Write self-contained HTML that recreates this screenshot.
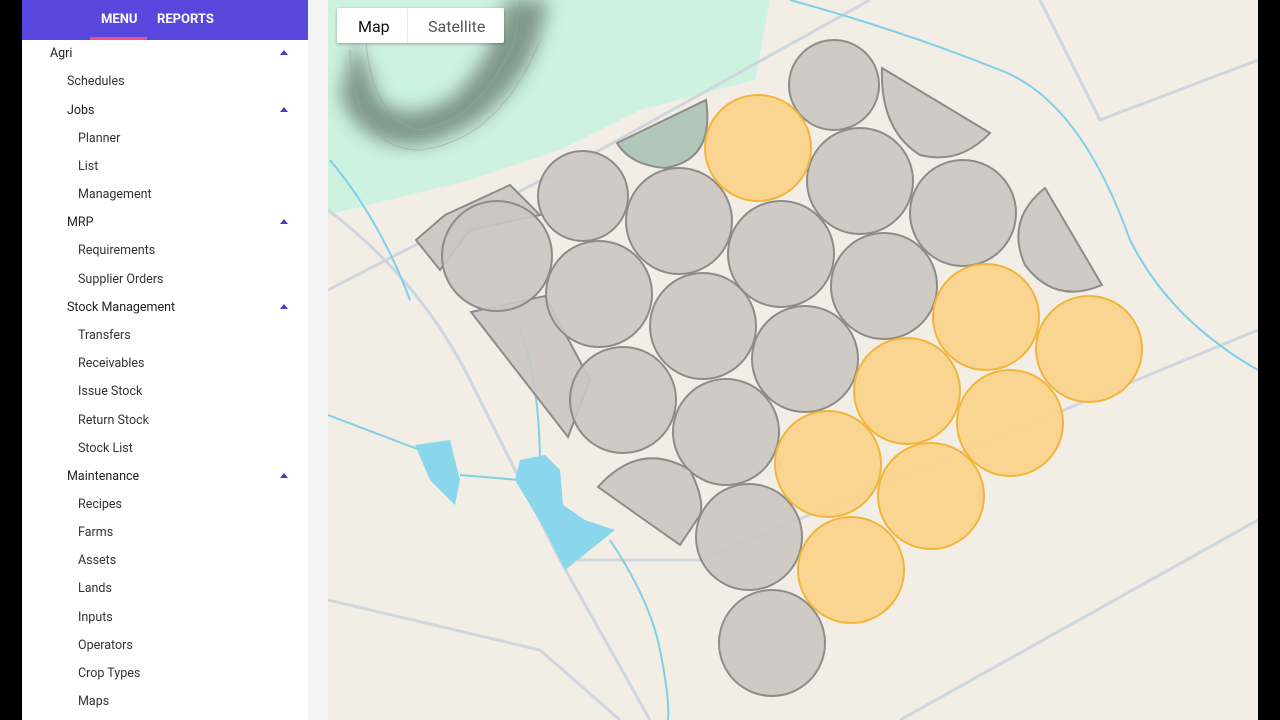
<!DOCTYPE html>
<html><head><meta charset="utf-8"><style>
*{margin:0;padding:0;box-sizing:border-box}
body{width:1280px;height:720px;overflow:hidden;background:#000;position:relative;font-family:"Roboto","Liberation Sans",sans-serif}
#side{position:absolute;left:22px;top:0;width:286px;height:720px;background:#fff}
#gap{position:absolute;left:308px;top:0;width:20px;height:720px;background:#f4f4f4}
#hdr{height:40px;background:#5847dd;position:relative;color:#fff;font-weight:bold;font-size:13px}
#hdr span{position:absolute;top:12px}
#ul{position:absolute;left:68px;top:37px;width:57px;height:3px;background:#e94e8e}
.it{position:absolute;font-size:12.5px;color:#333;white-space:nowrap}
.tri{position:absolute;left:258px;width:0;height:0;border-left:4px solid transparent;border-right:4px solid transparent;border-bottom:5px solid #4a3cc8}
#map{position:absolute;left:328px;top:0;width:930px;height:720px;background:#f2eee6;overflow:hidden}
#tg{position:absolute;left:337px;top:8px;width:167px;height:35px;background:#fff;box-shadow:0 1px 3px rgba(0,0,0,.3);border-radius:2px;font-size:16px}
#tg span{position:absolute;top:9px}
</style></head><body>
<div id="side">
<div id="hdr"><span style="left:79px">MENU</span><span style="left:135px">REPORTS</span><div id="ul"></div></div>
<div class="it" style="left:28px;top:46px;color:#222">Agri</div><div class="tri" style="top:50px"></div>
<div class="it" style="left:45px;top:74px">Schedules</div>
<div class="it" style="left:45px;top:103px;color:#222">Jobs</div><div class="tri" style="top:107px"></div>
<div class="it" style="left:56px;top:131px">Planner</div>
<div class="it" style="left:56px;top:159px">List</div>
<div class="it" style="left:56px;top:187px">Management</div>
<div class="it" style="left:45px;top:215px;color:#222">MRP</div><div class="tri" style="top:219px"></div>
<div class="it" style="left:56px;top:243px">Requirements</div>
<div class="it" style="left:56px;top:272px">Supplier Orders</div>
<div class="it" style="left:45px;top:300px;color:#222">Stock Management</div><div class="tri" style="top:304px"></div>
<div class="it" style="left:56px;top:328px">Transfers</div>
<div class="it" style="left:56px;top:356px">Receivables</div>
<div class="it" style="left:56px;top:384px">Issue Stock</div>
<div class="it" style="left:56px;top:413px">Return Stock</div>
<div class="it" style="left:56px;top:441px">Stock List</div>
<div class="it" style="left:45px;top:469px;color:#222">Maintenance</div><div class="tri" style="top:473px"></div>
<div class="it" style="left:56px;top:497px">Recipes</div>
<div class="it" style="left:56px;top:525px">Farms</div>
<div class="it" style="left:56px;top:553px">Assets</div>
<div class="it" style="left:56px;top:581px">Lands</div>
<div class="it" style="left:56px;top:610px">Inputs</div>
<div class="it" style="left:56px;top:638px">Operators</div>
<div class="it" style="left:56px;top:666px">Crop Types</div>
<div class="it" style="left:56px;top:694px">Maps</div>
</div>
<div id="gap"></div>
<div id="map">
<svg width="930" height="720" viewBox="328 0 930 720" xmlns="http://www.w3.org/2000/svg">
<defs><filter id="bl"><feGaussianBlur stdDeviation="9"/></filter></defs>
<path d="M328,0 L770,0 L755,80 L640,110 L560,150 L470,180 L328,215 Z" fill="#cdf2e0"/>
<path d="M340,95 Q360,150 420,145 Q490,130 530,60 Q545,25 548,0 L505,0 Q495,55 455,95 Q410,125 380,100 Q365,60 355,40 Z" fill="#55675e" opacity=".65" filter="url(#bl)"/>
<g fill="none" stroke="#9aa8a0" stroke-width="1" opacity=".6">
<path d="M365,30 Q370,120 420,130 Q480,120 515,40 L520,0"/>
<path d="M350,50 Q355,150 420,150 Q500,140 540,40"/>
</g>
<g fill="none" stroke="#d0d6de" stroke-width="3">
<path d="M328,290 L600,150 L870,0"/>
<path d="M328,210 Q420,280 470,380 L560,560 L650,720"/>
<path d="M560,560 L700,560 L1258,330"/>
<path d="M328,600 L540,650 L620,720"/>
<path d="M1040,0 L1100,120 L1258,60"/>
<path d="M900,720 L1258,520"/>
</g>
<g fill="none" stroke="#7fd0e8" stroke-width="2">
<path d="M330,160 Q380,220 410,300 M328,415 L420,450 M460,475 L520,480 M540,470 Q540,380 520,330"/>
<path d="M610,540 Q650,600 660,650 Q670,700 668,720"/>
<path d="M790,0 Q900,30 1000,70 Q1080,100 1130,240 Q1170,320 1258,370"/>
</g>
<path d="M415,445 L450,440 L460,480 L455,505 L430,480 Z" fill="#8ad6ec"/>
<path d="M520,460 L545,455 L560,470 L563,505 L585,520 L615,530 L565,570 L545,530 L515,480 Z" fill="#8ad6ec"/>
<g fill="#cbc6c0" fill-opacity=".9" stroke="#8e8c8a" stroke-width="2">
<path d="M882,68 L990,133 Q960,165 920,155 Q880,130 882,68 Z"/>
<path d="M1045,188 L1102,285 Q1055,305 1025,265 Q1005,220 1045,188 Z"/>
<path d="M617,143 L706,100 Q715,160 665,168 Q630,165 617,143 Z" fill="#a9c2b5"/>
<path d="M598,487 Q640,440 690,470 Q705,500 700,515 L680,545 Z"/>
<path d="M471,312 L545,296 L590,380 L568,437 Z"/>
<path d="M416,240 L445,215 L510,185 L540,215 L470,230 L440,270 Z"/>
<circle cx="834" cy="85" r="45"/><circle cx="583" cy="196" r="45"/>
<circle cx="679" cy="221" r="53"/><circle cx="860" cy="181" r="53"/>
<circle cx="963" cy="213" r="53"/><circle cx="497" cy="256" r="55"/>
<circle cx="599" cy="294" r="53"/><circle cx="781" cy="254" r="53"/>
<circle cx="884" cy="286" r="53"/><circle cx="703" cy="326" r="53"/>
<circle cx="805" cy="359" r="53"/><circle cx="623" cy="400" r="53"/>
<circle cx="726" cy="432" r="53"/><circle cx="749" cy="537" r="53"/>
<circle cx="772" cy="643" r="53"/>
</g>
<g fill="#fbd38a" fill-opacity=".92" stroke="#f2b53a" stroke-width="2">
<circle cx="758" cy="148" r="53"/><circle cx="986" cy="317" r="53"/>
<circle cx="1089" cy="349" r="53"/><circle cx="907" cy="391" r="53"/>
<circle cx="1010" cy="423" r="53"/><circle cx="828" cy="464" r="53"/>
<circle cx="931" cy="496" r="53"/><circle cx="851" cy="570" r="53"/>
</g>
</svg>
</div>
<div id="tg"><span style="left:21px;color:#111">Map</span><div style="position:absolute;left:70px;top:0;width:1px;height:35px;background:#e6e6e6"></div><span style="left:91px;color:#555">Satellite</span></div>
</body></html>
